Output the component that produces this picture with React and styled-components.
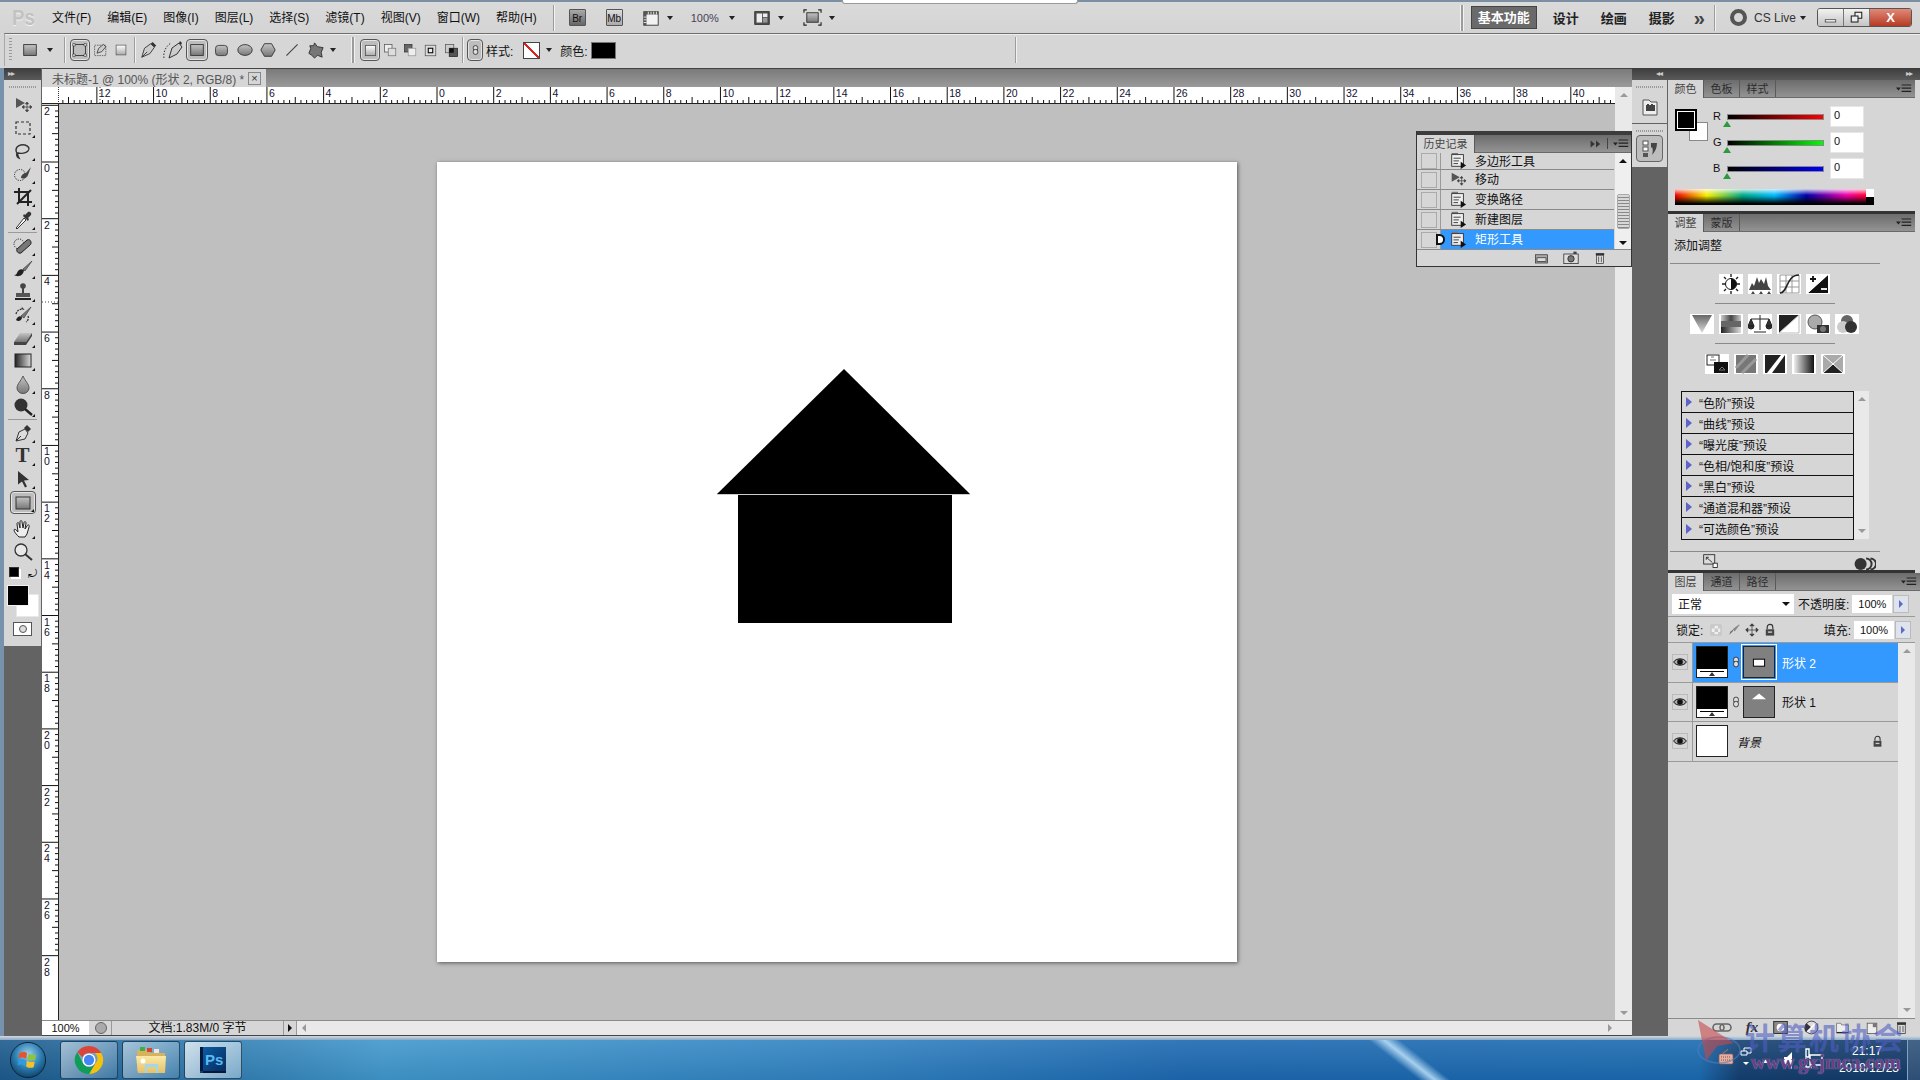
import { useMemo } from 'react';
import styled, { createGlobalStyle } from 'styled-components';

const GlobalStyle = createGlobalStyle`
  html, body { margin: 0; padding: 0; overflow: hidden; }
  body {
    font-family: "Liberation Sans", "Noto Sans CJK SC", sans-serif;
    font-size: 12px;
    color: #111;
  }
`;

const TOOLS_A = ['move', 'marquee', 'lasso', 'quick', 'crop', 'eyedrop'];
const TOOLS_B = ['heal', 'brush', 'stamp', 'histbrush', 'eraser', 'gradient', 'blur', 'dodge'];
const TOOLS_C = ['pen', 'type', 'pathsel'];
const MENUS = ['文件(F)', '编辑(E)', '图像(I)', '图层(L)', '选择(S)', '滤镜(T)', '视图(V)', '窗口(W)', '帮助(H)'];
const PRESETS = ['“色阶”预设', '“曲线”预设', '“曝光度”预设', '“色相/饱和度”预设', '“黑白”预设', '“通道混和器”预设', '“可选颜色”预设'];
const HISTORY = [
  { name: '多边形工具', icon: 'doc', h: 17 },
  { name: '移动', icon: 'move', h: 20 },
  { name: '变换路径', icon: 'doc', h: 20 },
  { name: '新建图层', icon: 'doc', h: 20 },
  { name: '矩形工具', icon: 'doc', h: 20, active: true },
];

// every drawn icon, on a 20x20 grid
const icons = {
  move: <><path d="M3 3l9 5-9 5z" fill="#555" /><path d="M14 8v8M10 12h8M14 7l-1.5 2h3zM14 17l-1.5-2h3zM9 12l2-1.5v3zM19 12l-2-1.5v3z" stroke="#444" fill="#444" strokeWidth=".8" /></>,
  marquee: <rect x="3" y="4" width="14" height="12" fill="none" stroke="#333" strokeWidth="1.2" strokeDasharray="3 2" />,
  lasso: <path d="M3 9c0-4 5-6 9-5s5 4 3 6-7 3-10 2c-1 1 0 3 1 5-2-1-3-3-2-5-1-1-1-2-1-3z" fill="none" stroke="#333" strokeWidth="1.4" />,
  quick: <><circle cx="7" cy="11" r="5.5" fill="none" stroke="#222" strokeDasharray="1.2 1.2" /><path d="M8 14c0-3 3-5 5-5l5-6-3 8c-1 3-4 4-7 3z" fill="#444" /></>,
  crop: <path d="M6 1v14h13M1 5h14v14M4 17L18 3" fill="none" stroke="#222" strokeWidth="2" />,
  eyedrop: <><path d="M4 17l-1 1 1 1 1-1 8-8-2-2z" fill="#fff" stroke="#333" /><path d="M10 6l5 5 1-2-1-1 3-3c1-2-1-4-3-3l-3 3-1-1z" fill="#333" /></>,
  heal: <><circle cx="6" cy="8" r="5" fill="none" stroke="#222" strokeDasharray="1.2 1.2" /><path d="M4 13l10-9c2-1 4 0 4 3 0 1 0 1-1 2l-9 8c-3 1-5-2-4-4z" fill="#777" stroke="#222" /></>,
  brush: <><path d="M10 10L19 2l-7 10z" fill="#777" stroke="#333" strokeWidth=".6" /><path d="M11 11c-3-2-6 0-7 3-1 2-2 2-3 2 3 2 9 2 10-5z" fill="#222" /></>,
  stamp: <><circle cx="10" cy="4" r="2.8" fill="#444" /><path d="M9 6h2v5h-2z" fill="#444" /><path d="M3 11h14v4H3z" fill="#555" /><path d="M2 16h16v2H2z" fill="#222" /></>,
  histbrush: <><path d="M8 11L18 2l-7 11z" fill="#777" stroke="#333" strokeWidth=".6" /><path d="M9 12c-2-2-5 0-6 3 2 2 6 1 6-3z" fill="#222" /><path d="M3 9c1-4 4-5 7-5l-2-2M15 11c1 2 0 5-2 6" fill="none" stroke="#333" strokeWidth="1.3" strokeDasharray="2 1" /></>,
  eraser: <><path d="M7 5h12l-6 9H1z" fill="url(#gGray)" /><path d="M1 14h12v3H1zM13 14l6-9v3l-6 9z" fill="#444" /></>,
  gradient: <rect x="2" y="3" width="16" height="13" fill="url(#gHorizDark)" stroke="#222" />,
  blur: <path d="M10 2c2 5 6 8 6 12a6 5.5 0 0 1-12 0c0-4 4-7 6-12z" fill="url(#gGray)" stroke="#555" />,
  dodge: <><circle cx="8" cy="8" r="6.5" fill="#333" /><path d="M12 12l7 6" stroke="#222" strokeWidth="2.4" /></>,
  pen: <><path d="M3 18l3-9 6-3 3 4-3 6z" fill="#ddd" stroke="#333" /><path d="M3 18l5-5" stroke="#333" /><path d="M11 5l3-3 4 4-3 3z" fill="#333" /></>,
  pathsel: <path d="M5 2l11 9-5 .5 3 6-2 1-3-6-4 3z" fill="#333" />,
  rect: <rect x="3" y="4" width="14" height="12" fill="url(#gGray)" stroke="#333" />,
  round: <rect x="3" y="4" width="14" height="12" rx="3.5" fill="url(#gGray)" stroke="#333" />,
  ellipse: <ellipse cx="10" cy="10" rx="8" ry="6" fill="url(#gGray)" stroke="#333" />,
  poly: <path d="M6 3h8l4 7-4 7H6l-4-7z" fill="url(#gGray)" stroke="#333" />,
  line: <path d="M3 17L17 3" stroke="#444" strokeWidth="1.4" />,
  custom: <path d="M9 2l3 4 6 1-2 5 1 5-5-2-3 3-3-3-3-2 2-5-1-3 4 0z" fill="#777" stroke="#333" />,
  hand: <path d="M6 18c-2-2-5-5-5-7 0-1 2-1 3 1l1 1-1-8c0-2 2-2 2 0l1 4 0-6c0-2 2-2 2 0l1 6 1-5c0-2 2-2 2 0l-1 6 2-3c1-2 3-1 2 1l-2 7-2 3z" fill="#eee" stroke="#222" />,
  zoom: <><circle cx="8" cy="8" r="6" fill="#e8e8e8" stroke="#333" strokeWidth="1.3" /><path d="M12 12l7 6" stroke="#333" strokeWidth="2" /></>,
  pathBox: <><rect x="2" y="3" width="15" height="14" fill="none" stroke="#222" /><path d="M1 2h3v3H1zM15 2h3v3h-3zM1 15h3v3H1zM15 15h3v3h-3z" fill="#eee" stroke="#222" strokeWidth=".7" /></>,
  pathPen: <><rect x="2" y="4" width="14" height="13" fill="none" stroke="#555" strokeDasharray="2 1" /><path d="M5 14l2-6 6-5 3 3-5 6z" fill="#ccc" stroke="#333" /></>,
  fillBox: <rect x="3" y="3" width="14" height="14" fill="url(#gLight)" stroke="#555" />,
  penOpt: <><path d="M2 18l3-10 7-5 4 4-5 7z" fill="#ccc" stroke="#333" /><path d="M2 18l6-6" stroke="#333" /><path d="M12 3l2-2 4 4-2 2z" fill="#333" /></>,
  freeOpt: <><path d="M1 18c-1-6 2-12 7-15" fill="none" stroke="#333" strokeDasharray="1.5 1.5" /><path d="M6 18l3-10 7-5 3 4-5 7z" fill="#ccc" stroke="#333" /><path d="M16 3l1-2 2 2-1 2z" fill="#333" /></>,
  mode1: <rect x="4" y="4" width="12" height="12" fill="url(#gLight)" stroke="#555" />,
  mode2: <><rect x="2" y="2" width="10" height="10" fill="#eee" stroke="#555" /><rect x="7" y="7" width="10" height="10" fill="#ddd" stroke="#777" /></>,
  mode3: <><rect x="2" y="2" width="10" height="10" fill="#666" stroke="#333" /><rect x="7" y="7" width="10" height="10" fill="#eee" stroke="#999" /></>,
  mode4: <><rect x="3" y="3" width="14" height="14" fill="#ddd" stroke="#555" /><rect x="7" y="7" width="6" height="6" fill="#eee" stroke="#000" strokeWidth="1.4" /></>,
  mode5: <><rect x="2" y="2" width="11" height="11" fill="#ccc" stroke="#555" /><rect x="7" y="7" width="11" height="11" fill="#555" stroke="#222" /><rect x="7" y="7" width="6" height="6" fill="#111" /></>,
  chain: <><rect x="6" y="2" width="8" height="9" rx="3.5" fill="#ddd" stroke="#222" strokeWidth="1.4" /><rect x="6" y="9" width="8" height="9" rx="3.5" fill="#ddd" stroke="#222" strokeWidth="1.4" /></>,
  doc: <><path d="M3 2h7v2h-7z" fill="#777" /><rect x="3" y="4" width="13" height="13" fill="#eee" stroke="#333" /><path d="M5 8h8M5 11h6M5 14h5" stroke="#333" /><path d="M13 12l6 4-6 4z" fill="#111" /></>,
  snap: <><rect x="2" y="5" width="16" height="11" fill="#aaa" stroke="#333" /><rect x="4" y="9" width="12" height="5" fill="#ddd" stroke="#333" /></>,
  camera: <><rect x="1" y="5" width="18" height="12" fill="#ddd" stroke="#333" /><circle cx="10" cy="11" r="4" fill="#777" stroke="#222" /><rect x="13" y="2" width="4" height="3" fill="#444" /></>,
  trash: <><rect x="5" y="6" width="10" height="12" fill="#ddd" stroke="#333" /><path d="M8 8v8M12 8v8" stroke="#333" /><path d="M4 3h12v3H4z" fill="#333" /></>,
  link: <><rect x="1" y="6" width="11" height="7" rx="3.5" fill="none" stroke="#666" strokeWidth="1.6" /><rect x="8" y="6" width="11" height="7" rx="3.5" fill="none" stroke="#666" strokeWidth="1.6" /></>,
  maskBtn: <><rect x="2" y="3" width="16" height="14" fill="#888" stroke="#222" /><circle cx="10" cy="10" r="4.5" fill="#fff" /></>,
  adjBtn: <><circle cx="10" cy="10" r="7.5" fill="#ddd" stroke="#333" /><path d="M10 10L4 16a7.5 7.5 0 0 1 0-11z" fill="#334" /><path d="M5 15L15 5" stroke="#fff" strokeWidth="2" /></>,
  folder: <><path d="M3 5h5l1 2h8v9H3z" fill="#eee" stroke="#777" /><path d="M3 16h14" stroke="#223" strokeWidth="1.5" /></>,
  newLayer: <><rect x="4" y="4" width="12" height="13" fill="#eee" stroke="#555" /><path d="M11 4h5v5h-5z" fill="#777" /></>,
  eye: <><path d="M1 10c3-6 15-6 18 0-3 6-15 6-18 0z" fill="#aaa" stroke="#111" strokeWidth="1.4" /><circle cx="10" cy="10" r="4" fill="#111" /></>,
  lock: <><path d="M6 9V6a4 4 0 0 1 8 0v3" fill="none" stroke="#333" strokeWidth="1.6" /><rect x="4" y="9" width="12" height="9" fill="#444" /><rect x="7" y="12" width="6" height="2" fill="#ccc" /></>,
  checker: <><rect x="3" y="3" width="14" height="14" fill="#f0f0f0" stroke="#aaa" /><path d="M3 3h5v5H3zM8 8h5v5H8zM13 13h4v4h-4zM13 3h4v5h-4zM3 13h5v4H3z" fill="#c8c8c8" /></>,
  paintLock: <><path d="M3 17l6-6-1-1-3 2c-1 2-1 4-2 5z" fill="#666" /><path d="M8 9L17 2l1 1-7 9z" fill="#888" /></>,
  moveLock: <path d="M10 2v16M2 10h16M10 1l-3 3h6zM10 19l-3-3h6zM1 10l3-3v6zM19 10l-3-3v6z" stroke="#333" fill="#333" />,
  gridIcon: <><rect x="2" y="3" width="16" height="15" fill="#f2f2f2" stroke="#333" /><path d="M2 3h16v3H2zM2 3h3v15H2z" fill="#555" /><path d="M7 3v3M10 3v3M13 3v3M16 3v3M2 9h3M2 12h3M2 15h3" stroke="#eee" /></>,
  arrangeIcon: <><rect x="2" y="3" width="16" height="14" fill="#555" stroke="#222" /><rect x="4" y="5" width="6" height="10" fill="#eee" /><rect x="11" y="5" width="5" height="4" fill="#eee" /><rect x="11" y="10" width="5" height="5" fill="#999" /></>,
  screenIcon: <><path d="M1 5V2h3M16 2h3v3M1 15v3h3M16 18h3v-3" fill="none" stroke="#222" strokeWidth="1.2" /><rect x="4" y="5" width="12" height="10" fill="url(#gGray)" stroke="#333" /></>,
  dockDoc: <><path d="M3 3h6l2 2h6v13H3z" fill="#eee" stroke="#555" /><rect x="6" y="8" width="9" height="6" fill="#444" /><path d="M7 7h2v2H7zM11 7h2v2h-2z" fill="#444" /></>,
  dockHist: <><rect x="3" y="2" width="5" height="4" fill="#fff" stroke="#555" /><rect x="3" y="8" width="5" height="4" fill="#fff" stroke="#555" /><rect x="3" y="14" width="5" height="4" fill="#555" /><path d="M11 4h6c0 5-2 9-5 12 1-3 1-6 0-8l-1 1z" fill="#444" /></>,
  expand: <><rect x="2" y="2" width="13" height="11" fill="#ddd" stroke="#222" /><path d="M5 5l7 6M5 5h3M5 5v3" stroke="#222" /><rect x="13" y="12" width="5" height="5" fill="#fff" stroke="#222" /></>,
  eyes: <><circle cx="6" cy="10" r="5.5" fill="#333" /><path d="M11 5a5 5 0 0 1 0 10M15 5a5 5 0 0 1 0 10" fill="none" stroke="#333" strokeWidth="1.8" /></>,
  minimize: <rect x="3" y="13" width="14" height="3" fill="#fff" stroke="#333" />,
  restore: <><rect x="8" y="3" width="9" height="8" fill="#eee" stroke="#222" strokeWidth="1.4" /><rect x="3" y="8" width="9" height="8" fill="#eee" stroke="#222" strokeWidth="1.4" /></>,
  tinyMask: <rect x="6" y="8" width="8" height="5" fill="#fff" stroke="#000" strokeWidth=".7" />,
  tinyHouse: <path d="M10 4l5 4H5z" fill="#fff" />,
  panelMenu: <><path d="M0 8l3 4 3-4z" fill="#222" /><path d="M7 5h12M7 9h12M7 13h12" stroke="#222" strokeWidth="1.5" /></>,
  collapse: <path d="M1 4l7 6-7 6zM10 4l7 6-7 6z" fill="#333" />,
};

const adjustIcons = {
  sun: <><circle cx="12" cy="10" r="5.5" fill="#fff" stroke="#111" /><path d="M12 4.5a5.5 5.5 0 0 1 0 11z" fill="#111" /><path d="M12 0v3M12 17v3M3 10h3M18 10h3M5 3l2 2M17 15l2 2M19 3l-2 2M7 15l-2 2" stroke="#222" strokeWidth="1.4" /></>,
  levels: <path d="M1 16l3-7 2 3 3-9 2 6 2-4 3 5 2-7 2 9 3 4zM3 20l2-3 2 3zM11 20l2-3 2 3zM19 20l2-3 2 3z" fill="#444" />,
  curves: <><path d="M3 1h19v18H3zM3 7h19M3 13h19M9 1v18M15 1v18" fill="#fff" stroke="#999" /><path d="M3 19c8 0 6-18 19-18" fill="none" stroke="#222" strokeWidth="1.6" /></>,
  exposure: <><path d="M2 19L22 1v18z" fill="#111" /><path d="M2 1h20L2 19z" fill="#fff" /><path d="M4 5h6M7 2v6" stroke="#111" strokeWidth="1.8" /><path d="M15 15h6" stroke="#fff" strokeWidth="1.8" /></>,
  vibrance: <path d="M2 1h20L12 19z" fill="url(#gDown)" />,
  hue: <><rect x="2" y="1" width="20" height="6" fill="url(#gStripe)" /><rect x="2" y="7" width="20" height="6" fill="#666" /><rect x="2" y="13" width="20" height="6" fill="url(#gHorizDark)" /></>,
  balance: <path d="M12 1v15M6 18h12M3 5h18M3 5l-3 7h6zM21 5l-3 7h6zM0 12a3 3 0 0 0 6 0zM18 12a3 3 0 0 0 6 0z" fill="#333" stroke="#222" />,
  bw: <><path d="M2 1h20L2 19z" fill="#222" /><path d="M22 1v18H2z" fill="#fff" stroke="#bbb" /></>,
  photo: <><circle cx="9" cy="8" r="7" fill="#aaa" stroke="#555" /><rect x="11" y="11" width="12" height="8" fill="#333" /><circle cx="17" cy="15" r="3" fill="#777" /></>,
  mixer: <><circle cx="12" cy="7" r="6" fill="#666" /><circle cx="8" cy="13" r="6" fill="#ccc" /><circle cx="16" cy="13" r="6" fill="#333" /></>,
  lookup: <><rect x="2" y="1" width="12" height="10" fill="#fff" stroke="#222" /><rect x="9" y="8" width="14" height="11" fill="#111" /><path d="M5 6h6M17 13l-3 3h6zM6 3h3" stroke="#777" /></>,
  invert: <><rect x="2" y="1" width="20" height="18" fill="#777" /><path d="M2 14L14 1M8 19L22 5" stroke="#999" strokeWidth="3" /></>,
  post: <><rect x="2" y="1" width="20" height="18" fill="#222" /><path d="M4 19L18 1h4L9 19z" fill="#fff" /></>,
  thresh: <rect x="2" y="1" width="20" height="18" fill="url(#gHoriz)" />,
  select: <><rect x="2" y="1" width="20" height="18" fill="#aaa" /><path d="M2 19l10-9 10 9z" fill="#222" /><path d="M2 1l20 18M22 1L2 19" stroke="#fff" /></>,
};

function Glyph({ name, w = 20, h }) {
  return (
    <IconSvg viewBox="0 0 20 20" width={w} height={h || w}>
      {icons[name]}
    </IconSvg>
  );
}

function HRuler() {
  const ticks = useMemo(() => {
    const out = [];
    const step = 5.669;
    for (let i = -66; i <= 208; i++) {
      const x = 378 + i * step;
      if (x < 0) continue;
      const major = i % 10 === 0;
      const mid = i % 5 === 0;
      out.push(<line key={i} x1={x} x2={x} y1={major ? 0 : mid ? 10 : 13} y2={17} stroke="#111" />);
      if (major) {
        out.push(<text key={'t' + i} x={x + 2} y={10} fontSize="10.5" fill="#113" fontFamily="Liberation Sans">{Math.abs(i / 5)}</text>);
      }
    }
    return out;
  }, []);
  return (
    <RulerSvg width="1556" height="17">
      {ticks}
      <line x1="41" x2="41" y1="0" y2="17" stroke="#444" strokeDasharray="1 2" />
      <line x1="0" x2="1556" y1="16.5" y2="16.5" stroke="#222" />
    </RulerSvg>
  );
}

function VRuler() {
  const ticks = useMemo(() => {
    const out = [];
    const step = 5.669;
    for (let i = -10; i <= 140; i++) {
      const y = 58 + i * step;
      const major = i % 10 === 0;
      const mid = i % 5 === 0;
      out.push(<line key={i} y1={y} y2={y} x1={major ? 0 : mid ? 10 : 13} x2={17} stroke="#111" />);
      if (major) {
        const digits = String(Math.abs(i / 5)).split('');
        digits.forEach((d, n) => {
          out.push(<text key={`t${i}-${n}`} x={2} y={y + 10 + n * 10} fontSize="10.5" fill="#113" fontFamily="Liberation Sans">{d}</text>);
        });
      }
    }
    return out;
  }, []);
  return (
    <RulerSvg width="17" height="916">
      {ticks}
      <line x1="16.5" x2="16.5" y1="0" y2="916" stroke="#222" />
      <line x1="0" x2="17" y1="198" y2="198" stroke="#444" strokeDasharray="1 2" />
    </RulerSvg>
  );
}

function ToolBtn({ name, corner = true, active, ml }) {
  return (
    <Tool $corner={corner} $active={active} $ml={ml}>
      {name === 'type' ? <TypeGlyph>T</TypeGlyph> : <Glyph name={name} w={20} />}
    </Tool>
  );
}

function TabRow({ tabs }) {
  return (
    <TabBar>
      {tabs.map((t, i) => <PanelTab key={t} $active={i === 0}>{t}</PanelTab>)}
      <PanelMenu><Glyph name="panelMenu" w={16} /></PanelMenu>
    </TabBar>
  );
}

function ColorRow({ label, from, to }) {
  return (
    <SliderRow>
      <ChanLabel>{label}</ChanLabel>
      <Slider $from={from} $to={to}><SliderThumb /></Slider>
      <NumField>0</NumField>
    </SliderRow>
  );
}

function AdjustRow({ names, pad }) {
  return (
    <AdjRow $pad={pad}>
      {names.map(n => (
        <AdjTile key={n} viewBox="0 0 24 20" width="24" height="20">{adjustIcons[n]}</AdjTile>
      ))}
    </AdjRow>
  );
}

function LayerRow({ active, name, italic, mask, plain, locked }) {
  return (
    <LayerLine $active={active}>
      <EyeCell><EyeBox><Glyph name="eye" w={14} /></EyeBox></EyeCell>
      <LayerBody $active={active}>
        <Thumb $white={plain}>{!plain && <ThumbStrip><ThumbMark /></ThumbStrip>}</Thumb>
        {!plain && <ChainBox><Glyph name="chain" w={12} h={18} /></ChainBox>}
        {!plain && <MaskThumb $active={active}><Glyph name={mask} w={28} /></MaskThumb>}
        <LayerName $active={active} $italic={italic}>{name}</LayerName>
        {locked && <LayerLock><Glyph name="lock" w={13} /></LayerLock>}
      </LayerBody>
    </LayerLine>
  );
}

export default function App() {
  return (
    <Page>
      <GlobalStyle />
      <DefsSvg>
        <defs>
          <linearGradient id="gGray" x1="0" y1="0" x2="0" y2="1"><stop offset="0" stopColor="#c4c4c4" /><stop offset="1" stopColor="#777" /></linearGradient>
          <linearGradient id="gLight" x1="0" y1="0" x2="0" y2="1"><stop offset="0" stopColor="#fff" /><stop offset="1" stopColor="#aaa" /></linearGradient>
          <linearGradient id="gHorizDark" x1="0" y1="0" x2="1" y2="0"><stop offset="0" stopColor="#222" /><stop offset="1" stopColor="#ddd" /></linearGradient>
          <linearGradient id="gHoriz" x1="0" y1="0" x2="1" y2="0"><stop offset="0" stopColor="#eee" /><stop offset="1" stopColor="#111" /></linearGradient>
          <linearGradient id="gDown" x1="0" y1="0" x2="0" y2="1"><stop offset="0" stopColor="#666" /><stop offset="1" stopColor="#ddd" /></linearGradient>
          <linearGradient id="gStripe" x1="0" y1="0" x2="1" y2="0"><stop offset="0" stopColor="#ccc" /><stop offset=".5" stopColor="#444" /><stop offset="1" stopColor="#ccc" /></linearGradient>
          <radialGradient id="gOrb" cx=".5" cy=".35" r=".7"><stop offset="0" stopColor="#9fd4ee" /><stop offset=".55" stopColor="#2a7cb0" /><stop offset="1" stopColor="#0d3a60" /></radialGradient>
          <linearGradient id="gFolder" x1="0" y1="0" x2="0" y2="1"><stop offset="0" stopColor="#fbe9a6" /><stop offset="1" stopColor="#e4c069" /></linearGradient>
          <linearGradient id="gPs" x1="0" y1="0" x2="1" y2="1"><stop offset="0" stopColor="#0c5fa8" /><stop offset="1" stopColor="#062a5c" /></linearGradient>
        </defs>
      </DefsSvg>
      <TopNotch />

      <MenuBar>
        <PsLogo>Ps</PsLogo>
        {MENUS.map(m => <MenuItem key={m}>{m}</MenuItem>)}
        <VLine />
        <BridgeBtn $ml={14}>Br</BridgeBtn>
        <BridgeBtn $ml={20} $outline>Mb</BridgeBtn>
        <BarIcon $ml={19}><Glyph name="gridIcon" w={18} /></BarIcon>
        <TinyCaret $ml={7} />
        <ZoomLabel>100%</ZoomLabel>
        <TinyCaret $ml={10} />
        <BarIcon $ml={18}><Glyph name="arrangeIcon" w={18} /></BarIcon>
        <TinyCaret $ml={7} />
        <BarIcon $ml={19}><Glyph name="screenIcon" w={19} /></BarIcon>
        <TinyCaret $ml={7} />
        <Workspaces>
          <VLine $double />
          <WorkspaceActive>基本功能</WorkspaceActive>
          <WorkspaceItem>设计</WorkspaceItem>
          <WorkspaceItem>绘画</WorkspaceItem>
          <WorkspaceItem>摄影</WorkspaceItem>
          <MoreMark>»</MoreMark>
          <VLine $ml={9} />
          <CsRing />
          <CsLabel>CS Live</CsLabel>
          <TinyCaret $ml={4} />
          <WinButtons>
            <WinBtn><Glyph name="minimize" w={15} /></WinBtn>
            <WinBtn><Glyph name="restore" w={15} /></WinBtn>
            <CloseBtn>X</CloseBtn>
          </WinButtons>
        </Workspaces>
      </MenuBar>

      <OptionsBar>
        <Grip />
        <OptItem $ml={10} $w={16}><Glyph name="rect" w={18} /></OptItem>
        <TinyCaret $ml={9} />
        <VLine $ml={11} />
        <OptItem $ml={4} $w={20} $active><Glyph name="pathBox" w={16} /></OptItem>
        <OptItem $ml={3} $w={16}><Glyph name="pathPen" w={16} /></OptItem>
        <OptItem $ml={6} $w={12}><Glyph name="fillBox" w={14} /></OptItem>
        <VLine $ml={7} />
        <OptItem $ml={4} $w={18}><Glyph name="penOpt" w={18} /></OptItem>
        <OptItem $ml={5} $w={20}><Glyph name="freeOpt" w={20} /></OptItem>
        <OptItem $ml={3} $w={22} $active><Glyph name="rect" w={18} /></OptItem>
        <OptItem $ml={6} $w={15}><Glyph name="round" w={17} /></OptItem>
        <OptItem $ml={8} $w={16}><Glyph name="ellipse" w={18} /></OptItem>
        <OptItem $ml={7} $w={16}><Glyph name="poly" w={18} /></OptItem>
        <OptItem $ml={9} $w={14}><Glyph name="line" w={16} /></OptItem>
        <OptItem $ml={7} $w={19}><Glyph name="custom" w={19} /></OptItem>
        <TinyCaret $ml={5} />
        <VLine $ml={15} $double />
        <OptItem $ml={5} $w={20} $active><Glyph name="mode1" w={17} /></OptItem>
        <OptItem $ml={3} $w={15}><Glyph name="mode2" w={15} /></OptItem>
        <OptItem $ml={5} $w={15}><Glyph name="mode3" w={15} /></OptItem>
        <OptItem $ml={5} $w={15}><Glyph name="mode4" w={15} /></OptItem>
        <OptItem $ml={6} $w={15}><Glyph name="mode5" w={15} /></OptItem>
        <VLine $ml={3} />
        <OptItem $ml={3} $w={16} $active><Glyph name="chain" w={11} h={18} /></OptItem>
        <OptLabel $ml={3}>样式:</OptLabel>
        <StyleSwatch $ml={10} />
        <TinyCaret $ml={6} />
        <OptLabel $ml={8}>颜色:</OptLabel>
        <ColorSwatch />
        <VLine $ml={399} />
      </OptionsBar>

      <Workspace>
        <ToolDock>
          <DockHeader><HeaderMark>▸▸</HeaderMark></DockHeader>
          <ToolPanel>
            <DottedGrip />
            {TOOLS_A.map(t => <ToolBtn key={t} name={t} corner={t !== 'move'} />)}
            <ToolSep />
            {TOOLS_B.map(t => <ToolBtn key={t} name={t} />)}
            <ToolSep />
            {TOOLS_C.map(t => <ToolBtn key={t} name={t} />)}
            <ToolBtn name="rect" active ml={1} />
            <ToolBtn name="hand" ml={3} />
            <ToolBtn name="zoom" corner={false} />
            <ColorChips>
              <MiniChips />
              <SwapMark>⤾</SwapMark>
            </ColorChips>
            <BigChips>
              <BigBg />
              <BigFg />
            </BigChips>
            <QuickMask><QuickDot /></QuickMask>
          </ToolPanel>
        </ToolDock>

        <Center>
          <DocTabs>
            <DocTab>
              未标题-1 @ 100% (形状 2, RGB/8) *
              <TabClose>×</TabClose>
            </DocTab>
          </DocTabs>
          <DocBody>
            <RulerGrid>
              <RulerCorner />
              <HRuler />
              <VRuler />
              <Canvas>
                <Doc>
                  <svg width="800" height="800" viewBox="0 0 800 800">
                    <path d="M407 207L533 332H280z" fill="#000" />
                    <path d="M280 332.500H533" stroke="#aaa" strokeWidth=".6" />
                    <rect x="301" y="333" width="214" height="128" fill="#000" />
                  </svg>
                </Doc>
              </Canvas>
            </RulerGrid>
            <VScroll>
              <Arrow $dir="up" />
              <Arrow $dir="down" />
            </VScroll>
          </DocBody>
          <StatusBar>
            <ZoomField>100%</ZoomField>
            <StatusIcon />
            <DocInfo>文档:1.83M/0 字节</DocInfo>
            <InfoArrow><Arrow $dir="right" $dark /></InfoArrow>
            <HScroll>
              <Arrow $dir="left" />
              <Arrow $dir="right" />
            </HScroll>
          </StatusBar>
        </Center>

        <RightDock>
          <DockHeader>
            <HeaderMark $ml={24}>◂◂</HeaderMark>
            <HeaderMark $right>▸▸</HeaderMark>
          </DockHeader>
          <RightBody>
            <IconDock>
              <IconSlot><DottedGrip /><SlotIcon><Glyph name="dockDoc" w={20} /></SlotIcon></IconSlot>
              <IconSlot><DottedGrip /><SlotIcon $active><Glyph name="dockHist" w={20} /></SlotIcon></IconSlot>
            </IconDock>
            <Panels>
              <ColorPanel>
                <TabRow tabs={['颜色', '色板', '样式']} />
                <ColorBody>
                  <Swatches><SwatchBg /><SwatchFg /></Swatches>
                  <Sliders>
                    <ColorRow label="R" from="#000" to="#f00" />
                    <ColorRow label="G" from="#000" to="#0f0" />
                    <ColorRow label="B" from="#000" to="#00f" />
                  </Sliders>
                </ColorBody>
                <Spectrum><SpectrumBW /></Spectrum>
              </ColorPanel>
              <AdjustPanel>
                <TabRow tabs={['调整', '蒙版']} />
                <AdjustTitle>添加调整</AdjustTitle>
                <AdjustLine />
                <AdjustRow pad={51} names={['sun', 'levels', 'curves', 'exposure']} />
                <AdjustSep />
                <AdjustRow pad={22} names={['vibrance', 'hue', 'balance', 'bw', 'photo', 'mixer']} />
                <AdjustSep />
                <AdjustRow pad={37} names={['lookup', 'invert', 'post', 'thresh', 'select']} />
                <PresetWrap>
                  <PresetList>
                    {PRESETS.map(p => (
                      <PresetRow key={p}><PresetCaret />{p}</PresetRow>
                    ))}
                  </PresetList>
                  <PresetScroll>
                    <Arrow $dir="up" />
                    <Arrow $dir="down" />
                  </PresetScroll>
                </PresetWrap>
                <PanelFoot>
                  <Glyph name="expand" w={17} />
                  <Glyph name="eyes" w={22} />
                </PanelFoot>
              </AdjustPanel>
              <LayersPanel>
                <TabRow tabs={['图层', '通道', '路径']} />
                <BlendRow>
                  <BlendSelect>正常<Arrow $dir="down" $dark /></BlendSelect>
                  <FieldLabel>不透明度:</FieldLabel>
                  <PercentField>100%</PercentField>
                  <StepBtn><Arrow $dir="right" $blue /></StepBtn>
                </BlendRow>
                <LockRow>
                  <FieldLabel>锁定:</FieldLabel>
                  <LockIcons>
                    <Glyph name="checker" w={14} />
                    <Glyph name="paintLock" w={14} />
                    <Glyph name="moveLock" w={14} />
                    <Glyph name="lock" w={14} />
                  </LockIcons>
                  <FieldLabel $auto>填充:</FieldLabel>
                  <PercentField>100%</PercentField>
                  <StepBtn><Arrow $dir="right" $blue /></StepBtn>
                </LockRow>
                <LayersArea>
                  <LayerList>
                    <LayerRow active name="形状 2" mask="tinyMask" />
                    <LayerRow name="形状 1" mask="tinyHouse" />
                    <LayerRow plain italic name="背景" locked />
                  </LayerList>
                  <LayerScroll>
                    <Arrow $dir="up" />
                    <Arrow $dir="down" />
                  </LayerScroll>
                </LayersArea>
                <LayerFoot>
                  <Glyph name="link" w={20} />
                  <FxMark>fx</FxMark>
                  <Glyph name="maskBtn" w={17} />
                  <Glyph name="adjBtn" w={17} />
                  <Glyph name="folder" w={17} />
                  <Glyph name="newLayer" w={16} />
                  <Glyph name="trash" w={15} />
                </LayerFoot>
              </LayersPanel>
            </Panels>
          </RightBody>
        </RightDock>
      </Workspace>

      <FootStrip />

      <Taskbar>
        <StartOrb viewBox="0 0 40 40" width="38" height="38">
          <circle cx="20" cy="20" r="18.5" fill="url(#gOrb)" stroke="#123" />
          <path d="M11 13c3-2 6-2 8 0l-1 6c-3-2-5-2-8-1z" fill="#e8532b" />
          <path d="M20.500 13c2 2 5 2 8 1l-1 6c-3 1-6 1-8-1z" fill="#8cc63f" />
          <path d="M10 19.500c3-1 5-1 8 1l-1 6c-3-2-5-2-8-1z" fill="#2f9be0" />
          <path d="M19 20.500c2 2 5 2 8 1l-1 6c-3 1-6 1-8-1z" fill="#f6c22a" />
        </StartOrb>
        <TaskButton>
          <svg viewBox="0 0 32 32" width="30" height="30">
            <path d="M16 1a15 15 0 0 1 13 7.500H16a7.500 7.500 0 0 0-7 4.500L3.500 7.500A15 15 0 0 1 16 1z" fill="#db4437" />
            <path d="M29 8.500A15 15 0 0 1 16 31l6.500-11a7.500 7.500 0 0 0 0-11.500z" fill="#f4c20d" />
            <path d="M3.500 7.500L9.500 19.500A7.500 7.500 0 0 0 22.500 20L16 31A15 15 0 0 1 3.500 7.500z" fill="#0f9d58" />
            <circle cx="16" cy="16" r="7" fill="#fff" />
            <circle cx="16" cy="16" r="5.500" fill="#4285f4" />
          </svg>
        </TaskButton>
        <TaskButton>
          <svg viewBox="0 0 32 32" width="32" height="32">
            <path d="M2 6h11l2 3h15v18H2z" fill="#d9b35c" />
            <path d="M5 3h5v4H5z" fill="#3fae49" />
            <path d="M12 4h5v4h-5z" fill="#d6452f" />
            <path d="M19 5h5v4h-5z" fill="#e8e8e8" />
            <path d="M1 12h30l-1 17H3z" fill="url(#gFolder)" />
            <path d="M10 20h13v9h-2v-6h-9v6h-2z" fill="#9fd8ea" />
            <circle cx="8" cy="17" r="2.500" fill="#fff" />
          </svg>
        </TaskButton>
        <TaskButton $active>
          <svg viewBox="0 0 32 32" width="32" height="32">
            <path d="M3 3h26v26H3z" fill="url(#gPs)" />
            <path d="M3 3h3v26H3zM3 29h26v-2H3z" fill="#03183a" />
            <text x="8" y="21" fontSize="15" fontWeight="bold" fill="#59b9f2" fontFamily="Liberation Sans">Ps</text>
          </svg>
        </TaskButton>
        <Tray>
          <TrayIcons viewBox="0 0 110 40" width="110" height="40">
            <rect x="5" y="14" width="14" height="10" rx="1.5" fill="#e3b0a2" stroke="#9a5a50" strokeWidth=".7" />
            <path d="M7 17h10M7 20h10" stroke="#8a4a44" strokeDasharray="1 1" />
            <path d="M9 14c0-3 4-2 5-5" fill="none" stroke="#a67a70" />
            <path d="M30 8h7v5h-7z" fill="none" stroke="#fff" />
            <path d="M27 11h6v4h-6z" fill="#1a4a80" stroke="#fff" />
            <path d="M29 22l3 3 3-3z" fill="#fff" />
            <path d="M48 23l3.500-3.500L55 23z" fill="#fff" />
            <path d="M70 17h3l5-5v17l-5-5h-3z" fill="#fff" />
            <path d="M92 9h3v8h-3zM96 15h12v10H96zM92 18v9h6" fill="none" stroke="#fff" strokeWidth="1.4" />
          </TrayIcons>
          <Clock>
            <span>21:17</span>
            <span>2018/12/23</span>
          </Clock>
          <ShowDesktop />
        </Tray>
      </Taskbar>

      <HistoryPanel>
        <HistoryTop />
        <TabBar>
          <PanelTab $active $w={58}>历史记录</PanelTab>
          <HistoryMenu>
            <Glyph name="collapse" w={12} />
            <MenuDivider />
            <Glyph name="panelMenu" w={16} />
          </HistoryMenu>
        </TabBar>
        <HistoryBody>
          <HistoryList>
            {HISTORY.map(h => (
              <HistoryRow key={h.name} $h={h.h}>
                <CheckCell><CheckBox />{h.active && <StateMark />}</CheckCell>
                <HistoryItem $active={h.active}>
                  <Glyph name={h.icon} w={18} />
                  <HistoryName $active={h.active}>{h.name}</HistoryName>
                </HistoryItem>
              </HistoryRow>
            ))}
          </HistoryList>
          <HistoryScroll>
            <Arrow $dir="up" $dark />
            <ScrollThumb />
            <Arrow $dir="down" $dark />
          </HistoryScroll>
        </HistoryBody>
        <HistoryFoot>
          <Glyph name="snap" w={15} />
          <Glyph name="camera" w={16} />
          <Glyph name="trash" w={14} />
        </HistoryFoot>
      </HistoryPanel>

      <Watermark>
        <WatermarkLogo viewBox="0 0 50 60" width="50" height="60">
          <ellipse cx="22" cy="30" rx="21" ry="13" fill="none" stroke="#4f7fc0" strokeWidth="1.5" opacity=".6" />
          <path d="M1 0L37 23 20 26 9 41z" fill="#c8484a" opacity=".6" />
        </WatermarkLogo>
        <WatermarkText>
          <WatermarkTitle>计算机协会</WatermarkTitle>
          <WatermarkUrl>www.gxjmca.com</WatermarkUrl>
        </WatermarkText>
      </Watermark>
    </Page>
  );
}

const Page = styled.div`
  position: relative;
  width: 1920px;
  height: 1080px;
  overflow: hidden;
  display: flex;
  flex-direction: column;
  background: #d6d6d6;
`;
const DefsSvg = styled.svg`
  position: absolute;
  width: 0;
  height: 0;
`;
const IconSvg = styled.svg`
  display: block;
  flex: none;
`;
const TopNotch = styled.div`
  position: absolute;
  left: 842px;
  top: 0;
  width: 236px;
  height: 4px;
  box-sizing: border-box;
  background: #fff;
  border: 1px solid #999;
  border-top: none;
  border-radius: 0 0 3px 3px;
`;

const MenuBar = styled.div`
  height: 33px;
  box-sizing: border-box;
  border-top: 2px solid #7d8fa3;
  display: flex;
  align-items: center;
  flex: none;
  background: linear-gradient(#dadada, #d4d4d4);
`;
const PsLogo = styled.div`
  width: 40px;
  padding-left: 12px;
  font-size: 22px;
  font-weight: bold;
  color: #c2c2c2;
  text-shadow: 0 1px 0 #f2f2f2;
  transform: scaleX(0.85);
  transform-origin: 12px 50%;
`;
const MenuItem = styled.div`
  margin-right: 16px;
  white-space: nowrap;
  line-height: 16px;
`;
const VLine = styled.div`
  flex: none;
  margin-left: ${p => p.$ml || 0}px;
  width: ${p => (p.$double ? 2 : 1)}px;
  height: 26px;
  background: #9c9c9c;
  border-right: 1px solid #f2f2f2;
  ${p => p.$double && 'border-left: 1px solid #f2f2f2;'}
`;
const BridgeBtn = styled.div`
  margin-left: ${p => p.$ml}px;
  width: 17px;
  height: 17px;
  font-size: 10px;
  line-height: 17px;
  text-align: center;
  box-sizing: border-box;
  border: 1px solid #555;
  background: ${p => (p.$outline ? 'linear-gradient(#ddd, #aaa)' : 'linear-gradient(#aaa, #666)')};
  color: #111;
  border-radius: 1px;
`;
const BarIcon = styled.div`
  margin-left: ${p => p.$ml}px;
`;
const TinyCaret = styled.div`
  flex: none;
  margin-left: ${p => p.$ml}px;
  width: 0;
  height: 0;
  border-left: 3.5px solid transparent;
  border-right: 3.5px solid transparent;
  border-top: 4px solid #222;
`;
const ZoomLabel = styled.div`
  margin-left: 18px;
  font-size: 11px;
  color: #445;
`;
const Workspaces = styled.div`
  margin-left: auto;
  padding-right: 8px;
  display: flex;
  align-items: center;
`;
const WorkspaceActive = styled.div`
  margin-left: 7px;
  width: 66px;
  height: 23px;
  box-sizing: border-box;
  border: 1px solid #444;
  background: #6a6a6a;
  color: #fff;
  font-size: 13px;
  font-weight: bold;
  text-align: center;
  line-height: 21px;
`;
const WorkspaceItem = styled.div`
  margin-left: 16px;
  margin-right: 6px;
  width: 26px;
  font-size: 13px;
  font-weight: bold;
  color: #222;
  white-space: nowrap;
`;
const MoreMark = styled.div`
  margin-left: 13px;
  font-size: 20px;
  line-height: 20px;
  font-weight: bold;
  color: #444;
`;
const CsRing = styled.div`
  margin-left: 14px;
  width: 17px;
  height: 17px;
  box-sizing: border-box;
  border: 4px solid #555;
  border-radius: 50%;
`;
const CsLabel = styled.div`
  margin-left: 7px;
  font-size: 12px;
  color: #333;
`;
const WinButtons = styled.div`
  margin-left: 11px;
  display: flex;
  height: 19px;
  box-sizing: border-box;
  border: 1px solid #555;
  border-radius: 3px;
  overflow: hidden;
`;
const WinBtn = styled.div`
  width: 25px;
  display: flex;
  align-items: center;
  justify-content: center;
  background: linear-gradient(#f2f2f2, #c4c4c4);
  border-right: 1px solid #777;
`;
const CloseBtn = styled.div`
  width: 41px;
  background: linear-gradient(#e08a78, #b73a22);
  color: #fff;
  font-weight: bold;
  font-size: 13px;
  text-align: center;
  line-height: 17px;
`;

const OptionsBar = styled.div`
  height: 33px;
  margin-left: 4px;
  box-sizing: border-box;
  border-top: 1px solid #6f6f6f;
  border-left: 1px solid #a8a8a8;
  box-shadow: inset 0 1px 0 #efefef;
  display: flex;
  align-items: center;
  flex: none;
`;
const Grip = styled.div`
  margin-left: 4px;
  width: 3px;
  height: 24px;
  background: repeating-linear-gradient(#999 0 1px, transparent 1px 3px);
`;
const OptItem = styled.div`
  flex: none;
  margin-left: ${p => p.$ml}px;
  width: ${p => p.$w}px;
  height: 22px;
  display: flex;
  align-items: center;
  justify-content: center;
  box-sizing: border-box;
  ${p => p.$active && `
    border: 1px solid #555;
    border-radius: 4px;
    background: #bdbdbd;
    box-shadow: inset 0 0 0 1px #e4e4e4;
  `}
`;
const OptLabel = styled.div`
  margin-left: ${p => p.$ml}px;
  white-space: nowrap;
`;
const StyleSwatch = styled.div`
  margin-left: ${p => p.$ml}px;
  width: 17px;
  height: 17px;
  box-sizing: border-box;
  border: 1px solid #444;
  background: linear-gradient(to bottom left, #fff 46%, #d22 46% 54%, #fff 54%);
`;
const ColorSwatch = styled.div`
  margin-left: 3px;
  width: 25px;
  height: 17px;
  background: #000;
  border: 1px solid #777;
  box-sizing: border-box;
`;

const Workspace = styled.div`
  margin-top: 2px;
  height: 968px;
  display: flex;
  flex: none;
  background: #636363;
  border-left: 4px solid #7692ad;
  box-sizing: border-box;
`;
const ToolDock = styled.div`
  width: 37px;
  margin-right: 1px;
  flex: none;
`;
const DockHeader = styled.div`
  height: 12px;
  display: flex;
  align-items: center;
  background: linear-gradient(#3c3c3c, #5a5a5a);
`;
const HeaderMark = styled.span`
  font-size: 8px;
  line-height: 12px;
  letter-spacing: -1px;
  color: #ccc;
  margin-left: ${p => (p.$right ? 'auto' : `${p.$ml || 4}px`)};
  ${p => p.$right && 'margin-right: 8px;'}
`;
const ToolPanel = styled.div`
  height: 566px;
  background: #d6d6d6;
  display: flex;
  flex-direction: column;
  align-items: center;
`;
const DottedGrip = styled.div`
  flex: none;
  width: 28px;
  height: 2px;
  margin: 6px auto 5px;
  background: repeating-linear-gradient(90deg, #999 0 1px, transparent 1px 2px);
`;
const Tool = styled.div`
  position: relative;
  flex: none;
  width: 26px;
  height: 23px;
  margin-top: ${p => p.$ml || 0}px;
  display: flex;
  align-items: center;
  justify-content: center;
  box-sizing: border-box;
  ${p => p.$active && `
    border: 1px solid #555;
    border-radius: 4px;
    background: #bdbdbd;
    box-shadow: inset 0 0 0 1px #e6e6e6;
  `}
  ${p => p.$corner && `
    &::after {
      content: '';
      position: absolute;
      right: 1px;
      bottom: 1px;
      border-left: 3px solid transparent;
      border-bottom: 3px solid #111;
    }
  `}
`;
const TypeGlyph = styled.span`
  font-family: "Liberation Serif", serif;
  font-size: 21px;
  font-weight: bold;
  line-height: 21px;
  color: #333;
`;
const ToolSep = styled.div`
  flex: none;
  width: 29px;
  height: 1px;
  margin: 1px 0;
  background: #9a9a9a;
`;
const ColorChips = styled.div`
  width: 28px;
  height: 13px;
  margin-top: 4px;
  display: flex;
  justify-content: space-between;
`;
const MiniChips = styled.div`
  width: 8px;
  height: 8px;
  background: #000;
  box-shadow: 2px 2px 0 #fff;
  border: 1px solid #333;
`;
const SwapMark = styled.span`
  font-size: 11px;
  line-height: 12px;
`;
const BigChips = styled.div`
  position: relative;
  width: 30px;
  height: 30px;
  margin-top: 6px;
`;
const BigBg = styled.div`
  position: absolute;
  right: 0;
  bottom: 0;
  width: 21px;
  height: 21px;
  background: #fff;
  box-shadow: 0 0 0 1px #e8e8e8;
`;
const BigFg = styled.div`
  position: absolute;
  left: 0;
  top: 0;
  width: 20px;
  height: 19px;
  background: #000;
  box-shadow: 0 0 0 1px #f2f2f2;
`;
const QuickMask = styled.div`
  margin-top: 6px;
  width: 17px;
  height: 12px;
  background: #fff;
  border: 1px solid #555;
  display: flex;
  align-items: center;
  justify-content: center;
`;
const QuickDot = styled.div`
  width: 8px;
  height: 8px;
  border-radius: 50%;
  background: #ddd;
  border: 1px solid #555;
  box-sizing: border-box;
`;

const Center = styled.div`
  flex: 1;
  min-width: 0;
  display: flex;
  flex-direction: column;
`;
const DocTabs = styled.div`
  height: 19px;
  flex: none;
  background: linear-gradient(#7a7a7a, #9a9a9a);
  border-top: 1px solid #444;
  box-sizing: border-box;
`;
const DocTab = styled.div`
  width: 224px;
  height: 18px;
  padding-left: 10px;
  box-sizing: border-box;
  background: #d6d6d6;
  display: flex;
  align-items: center;
  color: #555;
  font-size: 12px;
  white-space: nowrap;
`;
const TabClose = styled.span`
  margin-left: auto;
  margin-right: 5px;
  width: 11px;
  height: 11px;
  border: 1px solid #888;
  font-size: 11px;
  line-height: 10px;
  text-align: center;
  color: #333;
`;
const DocBody = styled.div`
  flex: 1;
  min-height: 0;
  display: flex;
`;
const RulerGrid = styled.div`
  flex: 1;
  min-width: 0;
  display: grid;
  grid-template-columns: 17px 1fr;
  grid-template-rows: 17px 1fr;
  overflow: hidden;
`;
const RulerCorner = styled.div`
  background: #fff;
  border-right: 1px dotted #333;
  border-bottom: 1px solid #222;
  box-sizing: border-box;
`;
const RulerSvg = styled.svg`
  display: block;
  background: #fff;
`;
const Canvas = styled.div`
  background: #bfbfbf;
  padding: 58px 0 0 378px;
  overflow: hidden;
`;
const Doc = styled.div`
  width: 800px;
  height: 800px;
  background: #fff;
  box-shadow: 1px 1px 4px rgba(0, 0, 0, 0.55);
  svg { display: block; }
`;
const VScroll = styled.div`
  width: 17px;
  flex: none;
  background: #e9e9e9;
  display: flex;
  flex-direction: column;
  align-items: center;
  justify-content: space-between;
  padding: 6px 0 5px;
  box-sizing: border-box;
`;
const Arrow = styled.span`
  display: block;
  width: 0;
  height: 0;
  flex: none;
  ${p => {
    const c = p.$dark ? '#111' : p.$blue ? '#5a6fc0' : '#999';
    const s = 'transparent';
    if (p.$dir === 'up') return `border-left: 4px solid ${s}; border-right: 4px solid ${s}; border-bottom: 4px solid ${c};`;
    if (p.$dir === 'down') return `border-left: 4px solid ${s}; border-right: 4px solid ${s}; border-top: 4px solid ${c};`;
    if (p.$dir === 'left') return `border-top: 4px solid ${s}; border-bottom: 4px solid ${s}; border-right: 4px solid ${c};`;
    return `border-top: 4px solid ${s}; border-bottom: 4px solid ${s}; border-left: 4px solid ${c};`;
  }}
`;
const StatusBar = styled.div`
  height: 16px;
  flex: none;
  display: flex;
  align-items: center;
  background: #d6d6d6;
  border-top: 1px solid #8a8a8a;
  border-bottom: 1px solid #444;
  box-sizing: border-box;
`;
const ZoomField = styled.div`
  width: 47px;
  height: 14px;
  background: #fff;
  text-align: center;
  font-size: 11px;
  line-height: 15px;
  flex: none;
`;
const StatusIcon = styled.div`
  margin-left: 6px;
  width: 12px;
  height: 12px;
  border-radius: 50%;
  background: #aaa;
  border: 1px solid #666;
  box-sizing: border-box;
  flex: none;
`;
const DocInfo = styled.div`
  margin-left: 4px;
  width: 172px;
  height: 14px;
  line-height: 14px;
  border-left: 1px solid #999;
  text-align: center;
  font-size: 12px;
  box-sizing: border-box;
  flex: none;
`;
const InfoArrow = styled.div`
  width: 14px;
  height: 14px;
  border-left: 1px solid #999;
  border-right: 1px solid #999;
  display: flex;
  align-items: center;
  justify-content: center;
  flex: none;
  box-sizing: border-box;
`;
const HScroll = styled.div`
  flex: 1;
  height: 14px;
  background: #e9e9e9;
  display: flex;
  align-items: center;
  justify-content: space-between;
  padding: 0 20px 0 5px;
`;

const RightDock = styled.div`
  width: 288px;
  flex: none;
  display: flex;
  flex-direction: column;
`;
const RightBody = styled.div`
  flex: 1;
  display: flex;
  min-height: 0;
`;
const IconDock = styled.div`
  width: 36px;
  flex: none;
`;
const IconSlot = styled.div`
  display: flow-root;
  height: 43px;
  margin-bottom: 1px;
  background: #d6d6d6;
  margin-right: 1px;
`;
const SlotIcon = styled.div`
  margin: 0 auto;
  width: 27px;
  height: 27px;
  display: flex;
  align-items: center;
  justify-content: center;
  box-sizing: border-box;
  ${p => p.$active && `
    margin-top: -2px;
    border: 1px solid #666;
    border-radius: 4px;
    background: #bdbdbd;
  `}
`;
const Panels = styled.div`
  flex: 1;
  min-width: 0;
  background: #d6d6d6;
  display: flex;
  flex-direction: column;
`;
const TabBar = styled.div`
  height: 17px;
  flex: none;
  display: flex;
  align-items: stretch;
  background: linear-gradient(#6c6c6c, #939393);
  border-bottom: 1px solid #6a6a6a;
  box-sizing: content-box;
`;
const PanelTab = styled.div`
  width: ${p => p.$w || 36}px;
  box-sizing: border-box;
  text-align: center;
  line-height: 18px;
  font-size: 11px;
  border-right: 1px solid #5a5a5a;
  color: ${p => (p.$active ? '#444' : '#2c2c2c')};
  background: ${p => (p.$active ? '#d6d6d6' : 'transparent')};
  height: ${p => (p.$active ? 18 : 17)}px;
`;
const PanelMenu = styled.div`
  margin-left: auto;
  padding-right: 3px;
  display: flex;
  align-items: center;
`;
const HistoryMenu = styled.div`
  margin-left: auto;
  padding-right: 2px;
  display: flex;
  align-items: center;
  gap: 5px;
`;
const MenuDivider = styled.div`
  width: 1px;
  height: 11px;
  background: #444;
`;
const ColorPanel = styled.div`
  height: 134px;
  flex: none;
  box-sizing: border-box;
  border-bottom: 3px solid #333;
  margin-right: 5px;
`;
const ColorBody = styled.div`
  display: flex;
  padding: 8px 0 0 8px;
`;
const Swatches = styled.div`
  position: relative;
  width: 34px;
  height: 36px;
  margin-top: 4px;
  flex: none;
`;
const SwatchFg = styled.div`
  position: absolute;
  left: 0;
  top: 0;
  width: 20px;
  height: 20px;
  box-sizing: border-box;
  background: #000;
  border: 1px solid #000;
  box-shadow: inset 0 0 0 1px #fff, 0 0 0 0 #000;
  outline: 1px solid #000;
`;
const SwatchBg = styled.div`
  position: absolute;
  left: 13px;
  top: 12px;
  width: 19px;
  height: 19px;
  box-sizing: border-box;
  background: #fff;
  border: 1px solid #888;
`;
const Sliders = styled.div`
  display: flex;
  flex-direction: column;
  gap: 5px;
  margin-left: 3px;
`;
const SliderRow = styled.div`
  display: flex;
  align-items: flex-start;
  height: 21px;
`;
const ChanLabel = styled.div`
  width: 14px;
  margin-top: 4px;
  font-size: 11px;
`;
const Slider = styled.div`
  position: relative;
  width: 97px;
  height: 6px;
  margin-top: 8px;
  border: 1px solid #888;
  box-sizing: border-box;
  background: linear-gradient(90deg, ${p => p.$from}, ${p => p.$to});
`;
const SliderThumb = styled.div`
  position: absolute;
  left: -5px;
  top: 6px;
  width: 0;
  height: 0;
  border-left: 4px solid transparent;
  border-right: 4px solid transparent;
  border-bottom: 6px solid #2a9a3c;
`;
const NumField = styled.div`
  margin-left: 6px;
  width: 34px;
  height: 21px;
  background: #fff;
  box-sizing: border-box;
  border: 1px solid #e6e6e6;
  padding: 0 0 0 3px;
  line-height: 17px;
  font-size: 11px;
`;
const Spectrum = styled.div`
  position: relative;
  margin: 10px 0 0 7px;
  width: 199px;
  height: 16px;
  background:
    linear-gradient(180deg, rgba(255,255,255,.8) 0%, rgba(255,255,255,0) 38%, rgba(0,0,0,0) 42%, #000 92%),
    linear-gradient(90deg, #e00 0%, #f7f000 16%, #0a8 34%, #0bf 50%, #00a 66%, #e0a 86%, #f03 96%);
`;
const SpectrumBW = styled.div`
  position: absolute;
  right: 0;
  top: 0;
  width: 8px;
  height: 16px;
  background: linear-gradient(#fff 50%, #000 50%);
`;
const AdjustPanel = styled.div`
  height: 359px;
  flex: none;
  box-sizing: border-box;
  border-bottom: 3px solid #333;
  margin-right: 5px;
`;
const AdjustTitle = styled.div`
  padding: 6px 0 0 6px;
  height: 26px;
  box-sizing: border-box;
  font-size: 12px;
  line-height: 16px;
`;
const AdjustLine = styled.div`
  margin: 5px 0 0 2px;
  width: 210px;
  height: 1px;
  background: #8a8a8a;
`;
const AdjRow = styled.div`
  display: flex;
  gap: 5px;
  padding-left: ${p => p.$pad}px;
  margin-top: 10px;
`;
const AdjTile = styled.svg`
  display: block;
  background: #fff;
  flex: none;
`;
const AdjustSep = styled.div`
  margin: 9px 0 0 47px;
  width: 120px;
  height: 1px;
  background: #8a8a8a;
`;
const PresetWrap = styled.div`
  display: flex;
  margin: 17px 0 0 13px;
`;
const PresetList = styled.div`
  width: 173px;
  box-sizing: border-box;
  border: 1px solid #111;
`;
const PresetRow = styled.div`
  height: 21px;
  box-sizing: border-box;
  display: flex;
  align-items: center;
  font-size: 12px;
  border-bottom: 1px solid #111;
  &:last-child { border-bottom: none; }
`;
const PresetCaret = styled.span`
  margin: 0 7px 0 4px;
  width: 0;
  height: 0;
  border-top: 5px solid transparent;
  border-bottom: 5px solid transparent;
  border-left: 6px solid #5d63c9;
`;
const PresetScroll = styled.div`
  width: 15px;
  height: 148px;
  background: #e9e9e9;
  display: flex;
  flex-direction: column;
  align-items: center;
  justify-content: space-between;
  padding: 6px 0;
  box-sizing: border-box;
`;
const PanelFoot = styled.div`
  margin: 11px 0 0 2px;
  width: 210px;
  padding: 1px 4px 0 32px;
  box-sizing: border-box;
  border-top: 1px solid #8a8a8a;
  display: flex;
  justify-content: space-between;
`;
const LayersPanel = styled.div`
  flex: 1;
  display: flex;
  flex-direction: column;
  min-height: 0;
`;
const BlendRow = styled.div`
  height: 26px;
  box-sizing: border-box;
  display: flex;
  align-items: center;
  flex: none;
  padding-left: 4px;
  border-bottom: 1px solid #9a9a9a;
  margin-right: 5px;
`;
const BlendSelect = styled.div`
  width: 122px;
  height: 20px;
  padding: 0 4px 0 6px;
  box-sizing: border-box;
  background: #fff;
  display: flex;
  align-items: center;
  justify-content: space-between;
  font-size: 12px;
`;
const FieldLabel = styled.div`
  margin-left: ${p => (p.$auto ? 'auto' : '4px')};
  font-size: 12px;
  white-space: nowrap;
`;
const PercentField = styled.div`
  margin-left: 3px;
  width: 40px;
  height: 18px;
  background: #fff;
  font-size: 11px;
  line-height: 18px;
  text-align: center;
  flex: none;
`;
const StepBtn = styled.div`
  margin-left: 1px;
  width: 16px;
  height: 18px;
  background: #dfe3ee;
  display: flex;
  align-items: center;
  justify-content: center;
  border: 1px solid #bbb;
  box-sizing: border-box;
  flex: none;
`;
const LockRow = styled(BlendRow)`
  padding-right: 4px;
`;
const LockIcons = styled.div`
  margin-left: 6px;
  display: flex;
  gap: 4px;
`;
const LayersArea = styled.div`
  flex: 1;
  display: flex;
  min-height: 0;
  margin-right: 5px;
`;
const LayerList = styled.div`
  flex: 1;
  min-width: 0;
`;
const LayerLine = styled.div`
  height: 39.500px;
  box-sizing: border-box;
  display: flex;
  border-bottom: 1px solid #9a9a9a;
`;
const EyeCell = styled.div`
  width: 25px;
  flex: none;
  display: flex;
  align-items: center;
  justify-content: center;
  border-right: 1px solid #9a9a9a;
  box-sizing: border-box;
`;
const EyeBox = styled.div`
  width: 16px;
  height: 16px;
  border: 1px solid #bbb;
  box-sizing: border-box;
  display: flex;
  align-items: center;
  justify-content: center;
`;
const LayerBody = styled.div`
  flex: 1;
  min-width: 0;
  display: flex;
  align-items: center;
  padding-left: 3px;
  background: ${p => (p.$active ? '#3399ff' : 'transparent')};
`;
const Thumb = styled.div`
  position: relative;
  width: 32px;
  height: 32px;
  box-sizing: border-box;
  border: 1px solid #222;
  background: ${p => (p.$white ? '#fff' : '#000')};
  flex: none;
`;
const ThumbStrip = styled.div`
  position: absolute;
  left: 0;
  right: 0;
  bottom: 0;
  height: 8px;
  background: #fff;
  display: flex;
  justify-content: center;
  box-sizing: border-box;
  &::before {
    content: '';
    position: absolute;
    left: 3px;
    right: 3px;
    top: 2px;
    height: 1px;
    background: #000;
  }
`;
const ThumbMark = styled.div`
  margin-top: 3px;
  width: 0;
  height: 0;
  border-left: 3px solid transparent;
  border-right: 3px solid transparent;
  border-bottom: 4px solid #333;
`;
const ChainBox = styled.div`
  width: 15px;
  display: flex;
  justify-content: center;
  flex: none;
`;
const MaskThumb = styled.div`
  width: 32px;
  height: 32px;
  background: #808080;
  box-sizing: border-box;
  border: 1px solid #222;
  flex: none;
  display: flex;
  align-items: center;
  justify-content: center;
  ${p => p.$active && 'outline: 1px solid #fff; outline-offset: 1px;'}
`;
const LayerName = styled.div`
  margin-left: ${p => (p.$italic ? 9 : 7)}px;
  font-size: 12px;
  white-space: nowrap;
  color: ${p => (p.$active ? '#fff' : '#111')};
  ${p => p.$italic && 'font-style: italic;'}
`;
const LayerLock = styled.div`
  margin-left: auto;
  margin-right: 14px;
`;
const LayerScroll = styled(PresetScroll)`
  width: 17px;
  height: auto;
  flex: none;
`;
const LayerFoot = styled.div`
  height: 18px;
  flex: none;
  margin-right: 5px;
  box-sizing: border-box;
  border-top: 1px solid #8a8a8a;
  padding: 0 6px 0 44px;
  display: flex;
  align-items: center;
  justify-content: space-between;
`;
const FxMark = styled.span`
  font-family: "Liberation Serif", serif;
  font-style: italic;
  font-weight: bold;
  font-size: 15px;
  color: #333;
`;

const FootStrip = styled.div`
  height: 4px;
  flex: none;
  background: linear-gradient(#cfd9e3, #8fa9c2);
`;
const Taskbar = styled.div`
  height: 40px;
  flex: none;
  display: flex;
  align-items: center;
  padding-left: 9px;
  background:
    linear-gradient(38deg, transparent 72%, rgba(190,225,250,.85) 72.8%, transparent 73.6%),
    linear-gradient(rgba(255,255,255,.1), rgba(0,0,0,.06)),
    linear-gradient(90deg, #1c5a8d 0%, #4097cc 20%, #2f80c0 45%, #1c68b0 62%, #1a6ab0 88.500%, #143f70 90.600%, #133a68 100%);
`;
const StartOrb = styled.svg`
  display: block;
  margin-right: 13px;
  flex: none;
`;
const TaskButton = styled.div`
  width: 58px;
  height: 38px;
  margin-right: 4px;
  box-sizing: border-box;
  border: 1px solid rgba(15, 45, 70, .8);
  border-radius: 3px;
  display: flex;
  align-items: center;
  justify-content: center;
  flex: none;
  background: ${p => (p.$active
    ? 'linear-gradient(135deg, rgba(255,255,255,.75), rgba(255,255,255,.35))'
    : 'linear-gradient(135deg, rgba(255,255,255,.55), rgba(255,255,255,.12))')};
`;
const Tray = styled.div`
  margin-left: auto;
  display: flex;
  align-items: center;
  height: 100%;
`;
const TrayIcons = styled.svg`
  display: block;
  margin-right: 9px;
  flex: none;
`;
const Clock = styled.div`
  width: 66px;
  display: flex;
  flex-direction: column;
  align-items: flex-end;
  color: #fff;
  font-size: 12px;
  line-height: 17px;
  span:first-child { padding-right: 17px; }
`;
const ShowDesktop = styled.div`
  margin-left: 8px;
  width: 13px;
  height: 100%;
  box-sizing: border-box;
  border-left: 1px solid #7fa3c5;
  background: rgba(255, 255, 255, .12);
`;

const HistoryPanel = styled.div`
  position: absolute;
  left: 1416px;
  top: 131px;
  width: 216px;
  height: 136px;
  box-sizing: border-box;
  border: 1px solid #333;
  border-top: none;
  background: #d6d6d6;
`;
const HistoryTop = styled.div`
  height: 4px;
  background: #3c3c3c;
`;
const HistoryBody = styled.div`
  display: flex;
  height: 96px;
`;
const HistoryList = styled.div`
  width: 197px;
  flex: none;
`;
const HistoryRow = styled.div`
  height: ${p => p.$h}px;
  box-sizing: border-box;
  display: flex;
  border-bottom: 1px solid #8a8a8a;
  overflow: hidden;
`;
const CheckCell = styled.div`
  position: relative;
  width: 24px;
  flex: none;
  display: flex;
  align-items: center;
  justify-content: center;
  border-right: 1px solid #9a9a9a;
  box-sizing: border-box;
`;
const CheckBox = styled.div`
  width: 16px;
  height: 16px;
  border: 1px solid #aaa;
  box-sizing: border-box;
`;
const StateMark = styled.div`
  position: absolute;
  right: -5px;
  top: 4px;
  width: 9px;
  height: 11px;
  box-sizing: border-box;
  background: #fff;
  border: 2px solid #111;
  border-radius: 0 6px 6px 0;
`;
const HistoryItem = styled.div`
  flex: 1;
  display: flex;
  align-items: center;
  padding: 0 0 2px 8px;
  background: ${p => (p.$active ? '#3399ff' : 'transparent')};
`;
const HistoryName = styled.span`
  margin-left: 8px;
  font-size: 12px;
  color: ${p => (p.$active ? '#fff' : '#111')};
`;
const HistoryScroll = styled.div`
  width: 17px;
  margin-left: 1px;
  background: #efefef;
  display: flex;
  flex-direction: column;
  align-items: center;
  justify-content: space-between;
  padding: 6px 0 4px;
  box-sizing: border-box;
`;
const ScrollThumb = styled.div`
  width: 11px;
  height: 33px;
  margin-top: 18px;
  background: repeating-linear-gradient(#d8d8d8 0 2px, #888 2px 3px);
  border: 1px solid #aaa;
  border-radius: 2px;
`;
const HistoryFoot = styled.div`
  height: 16px;
  display: flex;
  align-items: center;
  justify-content: flex-end;
  gap: 14px;
  padding-right: 24px;
  border-top: 1px solid #8a8a8a;
`;

const Watermark = styled.div`
  position: absolute;
  left: 1697px;
  top: 1020px;
  display: flex;
  pointer-events: none;
`;
const WatermarkLogo = styled.svg`
  display: block;
`;
const WatermarkText = styled.div`
  margin-left: -2px;
  display: flex;
  flex-direction: column;
`;
const WatermarkTitle = styled.div`
  font-family: "Noto Sans CJK SC", sans-serif;
  font-size: 30px;
  font-weight: 700;
  line-height: 32px;
  letter-spacing: 2px;
  color: rgba(80, 95, 195, .6);
  white-space: nowrap;
`;
const WatermarkUrl = styled.div`
  margin: 0 0 0 6px;
  font-family: "Liberation Serif", serif;
  font-weight: bold;
  font-size: 20px;
  line-height: 20px;
  color: #6b3f7d;
  text-shadow: 0 0 1px #8fa8e8;
  white-space: nowrap;
`;
